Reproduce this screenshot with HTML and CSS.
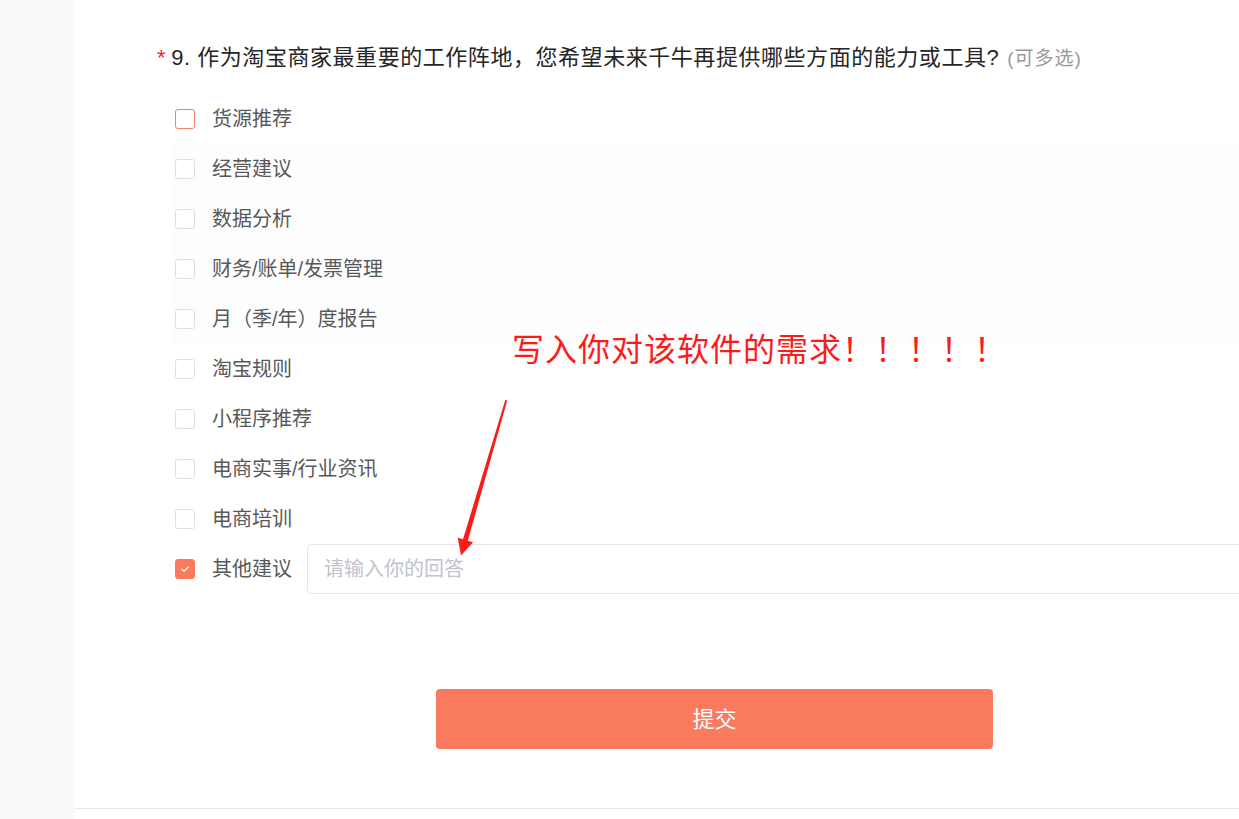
FILE: index.html
```html
<!DOCTYPE html>
<html lang="zh-CN">
<head>
<meta charset="utf-8">
<title>问卷</title>
<link rel="stylesheet" href="styles.css">
</head>
<body>
<div class="page">
  <aside class="side"></aside>
  <main class="main">
    <section class="content">
      <h2 class="title"><span class="req">*</span>9. 作为淘宝商家最重要的工作阵地，您希望未来千牛再提供哪些方面的能力或工具?<span class="hint">(可多选)</span></h2>
      <ul class="options">
        <li class="opt"><span class="box hover"></span><span class="label">货源推荐</span></li>
        <li class="opt tint"><span class="box"></span><span class="label">经营建议</span></li>
        <li class="opt tint"><span class="box"></span><span class="label">数据分析</span></li>
        <li class="opt tint"><span class="box"></span><span class="label">财务/账单/发票管理</span></li>
        <li class="opt tint"><span class="box"></span><span class="label">月（季/年）度报告</span></li>
        <li class="opt"><span class="box"></span><span class="label">淘宝规则</span></li>
        <li class="opt"><span class="box"></span><span class="label">小程序推荐</span></li>
        <li class="opt"><span class="box"></span><span class="label">电商实事/行业资讯</span></li>
        <li class="opt"><span class="box"></span><span class="label">电商培训</span></li>
        <li class="opt"><span class="box checked"><svg viewBox="0 0 20 20" width="20" height="20"><path d="M6.5 10.2 L9 12.6 L13.5 7.8" fill="none" stroke="#fff" stroke-width="1.4" stroke-linecap="round" stroke-linejoin="round"/></svg></span><span class="label">其他建议</span><input class="answer" type="text" placeholder="请输入你的回答"></li>
      </ul>
      <div class="actions"><button class="submit" type="button">提交</button></div>
    </section>
    <div class="footer-line"></div>
    <div class="note">写入你对该软件的需求！！！！！</div>
    <svg class="arrow" width="1239" height="819" viewBox="0 0 1239 819">
      <polygon points="505.3,400 507.2,400.5 467.8,540.7 473.1,542.2 461,555.5 457.7,537.8 463,539.3" fill="#ff1a1a"/>
    </svg>
  </main>
</div>
</body>
</html>
```

FILE: styles.css
```css
* { box-sizing: border-box; }
html, body { margin: 0; padding: 0; }
body {
  width: 1239px;
  height: 819px;
  overflow: hidden;
  font-family: "Liberation Sans", "Noto Sans CJK SC", sans-serif;
  background: #ffffff;
}
.page {
  display: flex;
  height: 819px;
}
.side {
  width: 75px;
  flex: none;
  background: #fafafa;
}
.main {
  flex: 1;
  display: flex;
  flex-direction: column;
  overflow: hidden;
}
.content {
  height: 808px;
  padding: 40px 0 0 82px;
}
.title {
  margin: 0;
  font-size: 22px;
  font-weight: normal;
  line-height: 36px;
  letter-spacing: 0.55px;
  color: #262626;
  white-space: nowrap;
}
.req {
  color: #f5222d;
  margin-right: 5px;
  font-size: 22px;
}
.hint {
  margin-left: 8px;
  font-size: 19px;
  letter-spacing: 1px;
  color: #999999;
}
.options {
  list-style: none;
  margin: 17px 0 0 16px;
  padding: 0;
}
.opt {
  height: 50px;
  display: flex;
  align-items: center;
  padding-left: 2px;
}
.opt.tint {
  background: #fdfdfd;
}
.box {
  width: 20px;
  height: 20px;
  flex: none;
  border: 1px solid #dcdfe6;
  border-radius: 3px;
  background: #fff;
  display: flex;
  align-items: center;
  justify-content: center;
}
.box.hover {
  border-color: #f9826a;
}
.box.checked {
  border-color: #fa7a5f;
  background: #fa7a5f;
}
.box.checked svg { display: block; }
.label {
  margin-left: 17px;
  font-size: 20px;
  line-height: 28px;
  color: #595959;
  white-space: nowrap;
}
.answer {
  margin-left: 15px;
  width: 960px;
  flex: none;
  height: 50px;
  border: 1px solid #e3e6eb;
  border-radius: 4px;
  padding: 0 16px;
  font-family: "Liberation Sans", "Noto Sans CJK SC", sans-serif;
  font-size: 20px;
  color: #595959;
  outline: none;
  background: #fff;
}
.answer::placeholder { color: #c0c4cc; }
.actions {
  margin-top: 95px;
  padding-left: 279px;
}
.submit {
  width: 557px;
  height: 60px;
  border: none;
  border-radius: 4px;
  background: #fa7a5f;
  color: #ffffff;
  font-family: "Noto Sans CJK SC", sans-serif;
  font-size: 22px;
  line-height: 56px;
  padding: 0 0 4px;
  cursor: pointer;
}
.footer-line {
  height: 1px;
  background: #e4e8ee;
}
.note {
  position: absolute;
  left: 512px;
  top: 327px;
  font-family: "Noto Sans CJK SC", sans-serif;
  font-size: 32px;
  line-height: 40px;
  letter-spacing: 1px;
  color: #ff1a1a;
  white-space: nowrap;
}
.arrow {
  position: absolute;
  left: 0;
  top: 0;
  pointer-events: none;
}
```
